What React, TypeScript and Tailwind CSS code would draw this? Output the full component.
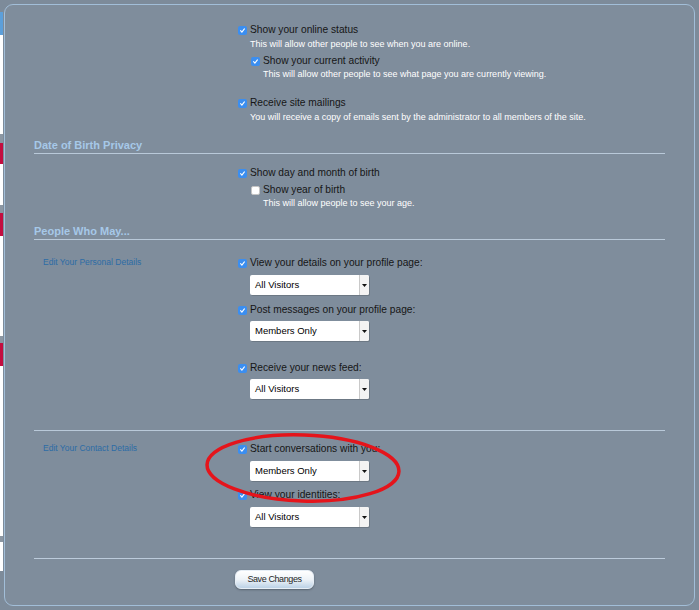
import React from "react";

function Box({ checked = true }: { checked?: boolean }) {
  return checked ? (
    <span className="w-[9px] h-[9px] rounded-[2px] bg-[#3b8ef0] flex items-center justify-center shrink-0">
      <svg width="7" height="7" viewBox="0 0 7 7">
        <path d="M1.6 3.7 L2.9 5.1 L5.4 1.9" stroke="white" strokeWidth="1.1" fill="none" strokeLinecap="round" />
      </svg>
    </span>
  ) : (
    <span className="w-[9px] h-[9px] rounded-[2px] bg-white border border-[#c4c4c4] shrink-0" />
  );
}

function Check({ label, checked = true, className = "" }: { label: string; checked?: boolean; className?: string }) {
  return (
    <div className={`flex items-center gap-[3px] h-[14px] ${className}`}>
      <Box checked={checked} />
      <span className="text-[10.2px] leading-[14px] text-[#161616] whitespace-nowrap">{label}</span>
    </div>
  );
}

function Desc({ text, className = "" }: { text: string; className?: string }) {
  return <div className={`text-[9px] leading-[12px] text-white whitespace-nowrap ${className}`}>{text}</div>;
}

function Sel({ value, className = "" }: { value: string; className?: string }) {
  return (
    <div className={`ml-[12px] w-[119px] h-[20px] bg-white rounded-[2px] flex items-stretch shadow-[1px_1px_0_#6c7884] ${className}`}>
      <span className="flex-1 pl-[5px] flex items-center text-[9.5px] text-black">{value}</span>
      <span className="w-[10px] border-l border-[#c9c9c9] bg-[#f3f3f3] rounded-r-[2px] flex items-center justify-center">
        <svg width="5" height="3" viewBox="0 0 5 3">
          <path d="M0 0 H5 L2.5 3 Z" fill="#111" />
        </svg>
      </span>
    </div>
  );
}

function Header({ text, className = "" }: { text: string; className?: string }) {
  return (
    <div className={`h-[16px] border-b border-[#b9c9d9] text-[11px] leading-[14px] font-bold text-[#a6c8e8] ${className}`}>
      {text}
    </div>
  );
}

function SideLabel({ text }: { text: string }) {
  return <div className="pl-[9px] text-[8.5px] leading-[12px] text-[#2c6ca6] whitespace-nowrap">{text}</div>;
}

export default function App() {
  return (
    <div className="relative w-[699px] h-[610px] overflow-hidden bg-[#7d8b9a] flex font-['Liberation_Sans',Arial,sans-serif]">
      {/* background strip on the left */}
      <div className="w-[3px] flex flex-col shrink-0">
        <div className="h-[12px] bg-[#7d8b9a]" />
        <div className="h-[23px] bg-[#5c9fda]" />
        <div className="h-[99px] bg-white" />
        <div className="h-[9px] bg-[#8b96a2]" />
        <div className="h-[21px] bg-[#c30d3f]" />
        <div className="h-[41px] bg-white" />
        <div className="h-[8px] bg-[#8b96a2]" />
        <div className="h-[23px] bg-[#c30d3f]" />
        <div className="h-[100px] bg-white" />
        <div className="h-[7px] bg-[#8b96a2]" />
        <div className="h-[23px] bg-[#c30d3f]" />
        <div className="h-[170px] bg-white" />
        <div className="h-[6px] bg-[#8b96a2]" />
        <div className="h-[29px] bg-white" />
      </div>

      <div className="ml-[1px] mt-[4px] w-[691px] h-[602px] rounded-[9px] border border-[#a2bed8] bg-[#7f8d9c] px-[29px] flex flex-col">
        {/* section 1 */}
        <div className="ml-[204px] pt-[18px] flex flex-col">
          <Check label="Show your online status" />
          <Desc className="mt-[1px] pl-[12px]" text="This will allow other people to see when you are online." />
          <Check className="mt-[4px] ml-[13px]" label="Show your current activity" />
          <Desc className="pl-[25px]" text="This will allow other people to see what page you are currently viewing." />
          <Check className="mt-[16px]" label="Receive site mailings" />
          <Desc className="mt-[1px] pl-[12px]" text="You will receive a copy of emails sent by the administrator to all members of the site." />
        </div>

        <Header className="mt-[15px]" text="Date of Birth Privacy" />

        <div className="ml-[204px] mt-[12px] flex flex-col">
          <Check label="Show day and month of birth" />
          <Check className="mt-[3px] ml-[13px]" checked={false} label="Show year of birth" />
          <Desc className="pl-[25px]" text="This will allow people to see your age." />
        </div>

        <Header className="mt-[15px]" text="People Who May..." />

        <div className="grid grid-cols-[204px_1fr] mt-[16px]">
          <SideLabel text="Edit Your Personal Details" />
          <div className="flex flex-col">
            <Check label="View your details on your profile page:" />
            <Sel className="mt-[5px]" value="All Visitors" />
            <Check className="mt-[8px]" label="Post messages on your profile page:" />
            <Sel className="mt-[4px]" value="Members Only" />
            <Check className="mt-[20px]" label="Receive your news feed:" />
            <Sel className="mt-[4px]" value="All Visitors" />
          </div>
        </div>

        <div className="mt-[31px] h-px bg-[#b9c9d9]" />

        <div className="grid grid-cols-[204px_1fr] mt-[11px]">
          <SideLabel text="Edit Your Contact Details" />
          <div className="flex flex-col">
            <Check label="Start conversations with you:" />
            <Sel className="mt-[5px]" value="Members Only" />
            <Check className="mt-[7px]" label="View your identities:" />
            <Sel className="mt-[5px]" value="All Visitors" />
          </div>
        </div>

        <div className="mt-[31px] h-px bg-[#bccbdb]" />

        <div className="mt-[11px] ml-[201px] flex">
          <button className="w-[79px] h-[19px] rounded-[6px] border border-[#e6eef6] bg-gradient-to-b from-[#ffffff] via-[#eef3f8] to-[#bcd2e6] shadow-[0_1px_2px_rgba(40,50,60,0.45)] text-[9px] leading-[17px] tracking-[-0.4px] text-[#1e1e1e]">
            Save Changes
          </button>
        </div>
      </div>

      <svg className="absolute left-0 top-0 pointer-events-none" width="699" height="610" viewBox="0 0 699 610">
        <ellipse cx="303" cy="468" rx="96" ry="33" fill="none" stroke="#e5141b" strokeWidth="3.5" transform="rotate(2 303 468)" />
      </svg>
    </div>
  );
}
